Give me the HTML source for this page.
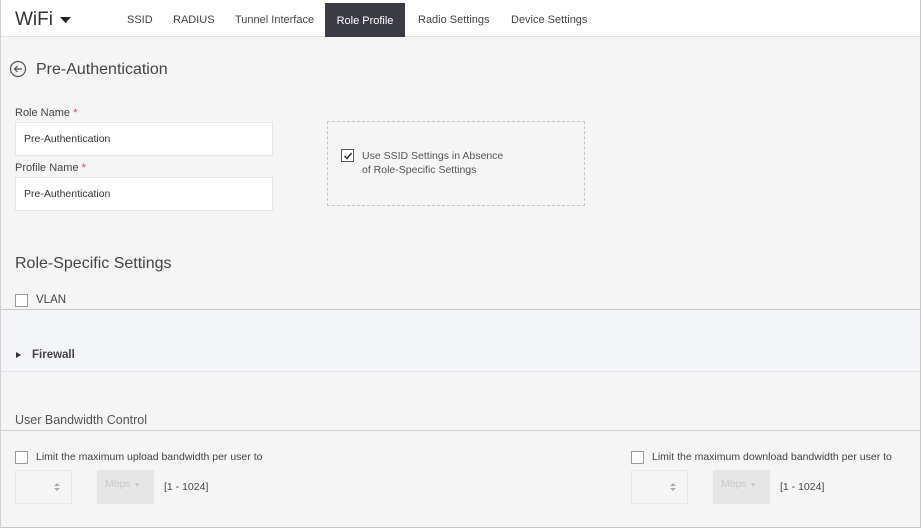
<!DOCTYPE html>
<html><head><meta charset="utf-8"><style>
*{box-sizing:border-box;margin:0;padding:0}
html,body{width:921px;height:528px;overflow:hidden;background:#f5f5f5;font-family:"Liberation Sans",sans-serif;color:#444}
.frame{position:absolute;left:0;top:0;width:921px;height:528px;border-right:1px solid #c6c6c6;border-bottom:1px solid #c6c6c6;border-left:1px solid #d0d0d0}
.hdr{position:absolute;left:0;top:0;width:921px;height:37px;background:#fff;border-bottom:1px solid #e2e2e2}
.abs{position:absolute;white-space:nowrap}
.tab{position:absolute;top:14px;font-size:11px;color:#444}
.active{position:absolute;left:325px;top:3px;width:80px;height:34px;background:#3b3b44;color:#fff;font-size:11px;text-align:center;line-height:36px}
.inp{position:absolute;background:#fff;border:1px solid #e6e6e6;font-size:10.5px;color:#333;padding-left:8px;line-height:33px}
.cb{position:absolute;width:13px;height:13px;border:1px solid #999;background:#fff}
.lbl{font-size:11px;color:#444}
.star{color:#e04050}
.hr{position:absolute;left:0;width:921px;height:1px;background:#cfcfcf}
</style></head><body>
<div class="hdr"></div>
<div class="abs" style="left:15px;top:9px;font-size:19px;color:#333">WiFi</div>
<svg class="abs" style="left:60px;top:17px" width="12" height="7"><path d="M0 0H11L5.5 6Z" fill="#222"/></svg>
<div class="tab" style="left:127px">SSID</div>
<div class="tab" style="left:173px">RADIUS</div>
<div class="tab" style="left:235px">Tunnel Interface</div>
<div class="active">Role Profile</div>
<div class="tab" style="left:418px">Radio Settings</div>
<div class="tab" style="left:511px">Device Settings</div>

<svg class="abs" style="left:9px;top:60px" width="18" height="18"><circle cx="9" cy="9" r="7.5" fill="none" stroke="#555" stroke-width="1.2"/><path d="M13 9H5.5M8.5 6L5.5 9L8.5 12" fill="none" stroke="#555" stroke-width="1.2"/></svg>
<div class="abs" style="left:36px;top:61px;font-size:16px;color:#444">Pre-Authentication</div>

<div class="abs lbl" style="left:15px;top:107px">Role Name <span class="star">*</span></div>
<div class="inp" style="left:15px;top:122px;width:258px;height:34px">Pre-Authentication</div>
<div class="abs lbl" style="left:15px;top:162px">Profile Name <span class="star">*</span></div>
<div class="inp" style="left:15px;top:177px;width:258px;height:34px">Pre-Authentication</div>

<div class="abs" style="left:327px;top:121px;width:258px;height:85px;border:1px dashed #c4c4c4"></div>
<div class="cb" style="left:341px;top:149px;border-color:#555"></div>
<svg class="abs" style="left:343px;top:151px" width="10" height="10"><path d="M1.5 5L4 7.5L8.5 2" fill="none" stroke="#333" stroke-width="1.5"/></svg>
<div class="abs" style="left:362px;top:149px;font-size:10.5px;line-height:14px;color:#555">Use SSID Settings in Absence<br>of Role-Specific Settings</div>

<div class="abs" style="left:15px;top:255px;font-size:16px;color:#444">Role-Specific Settings</div>
<div class="cb" style="left:15px;top:294px"></div>
<div class="abs lbl" style="left:36px;top:294px;font-size:11.5px">VLAN</div>
<div class="hr" style="top:309px;background:#c8c8c8"></div>
<div class="abs" style="left:0;top:310px;width:921px;height:62px;background:#f3f5f9;border-bottom:1px dotted #cfd3db"></div>
<svg class="abs" style="left:16px;top:352px" width="5" height="6"><path d="M0 0L5 3L0 6Z" fill="#333"/></svg>
<div class="abs" style="left:32px;top:349px;font-size:11.5px;font-weight:bold;color:#444">Firewall</div>

<div class="abs" style="left:15px;top:413px;font-size:12.5px;color:#555">User Bandwidth Control</div>
<div class="hr" style="top:430px"></div>

<div class="cb" style="left:15px;top:451px"></div>
<div class="abs lbl" style="left:36px;top:451px;font-size:10.5px">Limit the maximum upload bandwidth per user to</div>
<div class="abs" style="left:15px;top:470px;width:57px;height:34px;border:1px solid #e8e8e8;background:#f5f5f5"></div>
<svg class="abs" style="left:54px;top:482px" width="6" height="10"><path d="M0 4L3 1L6 4ZM0 6L3 9L6 6Z" fill="#aaa"/></svg>
<div class="abs" style="left:97px;top:470px;width:57px;height:34px;background:#e6e6e6;font-size:10.5px;color:#c8c8c8;padding:8px 0 0 8px">Mbps <span style="font-size:7px">▼</span></div>
<div class="abs lbl" style="left:164px;top:481px;font-size:10.5px">[1 - 1024]</div>

<div class="cb" style="left:631px;top:451px"></div>
<div class="abs lbl" style="left:652px;top:451px;font-size:10.5px">Limit the maximum download bandwidth per user to</div>
<div class="abs" style="left:631px;top:470px;width:57px;height:34px;border:1px solid #e8e8e8;background:#f5f5f5"></div>
<svg class="abs" style="left:670px;top:482px" width="6" height="10"><path d="M0 4L3 1L6 4ZM0 6L3 9L6 6Z" fill="#aaa"/></svg>
<div class="abs" style="left:713px;top:470px;width:57px;height:34px;background:#e6e6e6;font-size:10.5px;color:#c8c8c8;padding:8px 0 0 8px">Mbps <span style="font-size:7px">▼</span></div>
<div class="abs lbl" style="left:780px;top:481px;font-size:10.5px">[1 - 1024]</div>
<div class="frame"></div>
</body></html>
